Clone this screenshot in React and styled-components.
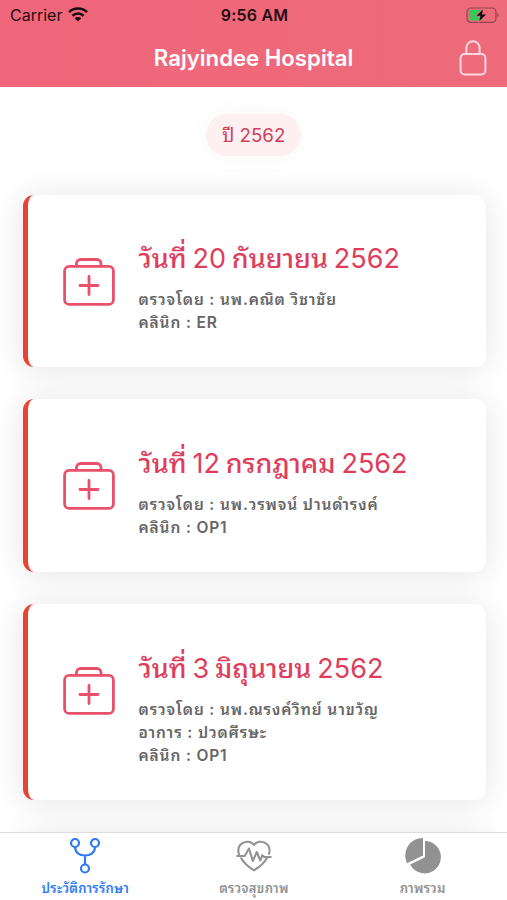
import React from 'react';
import styled, { createGlobalStyle } from 'styled-components';

const records = [
    { day: '20', month: 'กันยายน', year: '2562', lines: [['ตรวจโดย : นพ.คณิต วิชาชัย'], ['คลินิก : ', 'ER']] },
    { day: '12', month: 'กรกฎาคม', year: '2562', lines: [['ตรวจโดย : นพ.วรพจน์ ปานดำรงค์'], ['คลินิก : ', 'OP1']] },
    { day: '3', month: 'มิถุนายน', year: '2562', lines: [['ตรวจโดย : นพ.ณรงค์วิทย์ นาขวัญ'], ['อาการ : ปวดศีรษะ'], ['คลินิก : ', 'OP1']] },
];

const WifiIcon = () => (
    <svg width="20" height="15" viewBox="0 0 20 15">
        <g fill="none" stroke="#1d0b0f" strokeWidth="2.6">
            <path d="M1 5.2a12.8 12.8 0 0 1 18 0" />
            <path d="M4.4 8.8a8 8 0 0 1 11.2 0" />
        </g>
        <path d="M10 14.6l-3.3-3.3a4.7 4.7 0 0 1 6.6 0z" fill="#1d0b0f" />
    </svg>
);

const BatteryIcon = () => (
    <svg width="33" height="16" viewBox="0 0 33 16">
        <rect x="1" y="1" width="29" height="14.4" rx="4" fill="none" stroke="#93414f" strokeWidth="1.2" />
        <path d="M31.4 6v4.4c1.4-.6 1.4-3.8 0-4.4z" fill="#93414f" />
        <rect x="3" y="3" width="14" height="10.4" rx="1.6" fill="#35c759" />
        <path d="M16.8 2.4L10.6 8.8h3.9l-1.2 5.2L20 7.4h-4z" fill="#0d0808" stroke="#ef687b" strokeWidth="1.6" paintOrder="stroke" />
    </svg>
);

const LockIcon = () => (
    <svg width="28" height="38" viewBox="0 0 28 38" fill="none" stroke="#fdd9dd" strokeWidth="2">
        <rect x="1.6" y="15" width="24.8" height="20.5" rx="4" />
        <path d="M7.4 15V8.8a6.6 6.6 0 0 1 13.2 0V15" />
    </svg>
);

const KitIcon = () => (
    <svg width="52" height="48" viewBox="0 0 52 48" fill="none" stroke="#e9506a" strokeWidth="2.8" strokeLinecap="round">
        <rect x="1.6" y="8.4" width="48.8" height="38" rx="4.5" />
        <path d="M13.5 8V5.5a4 4 0 0 1 4-4H34a4 4 0 0 1 4 4V8" />
        <path d="M26 18.5v18M17 27.5h18" />
    </svg>
);

const ForkIcon = () => (
    <svg width="32" height="36" viewBox="0 0 32 36" fill="none" stroke="#2f7bf6" strokeWidth="2.2">
        <circle cx="6" cy="5" r="4" />
        <circle cx="26" cy="5" r="4" />
        <circle cx="16" cy="30.5" r="4" />
        <path d="M6 9c0 5.5 4.500 8.500 10 8.500S26 14.500 26 9M16 17.500v9" />
    </svg>
);

const HeartIcon = () => (
    <svg width="36" height="34" viewBox="0 0 36 34" fill="none" stroke="#929292" strokeWidth="2.1" strokeLinejoin="round">
        <path d="M3.2 16.2C1.5 11 2.8 6.4 6.4 4.1 10.5 1.6 15.6 2.6 18 6c2.400-3.400 7.500-4.400 11.600-1.900 3.600 2.300 4.900 6.900 3.100 11.600" />
        <path d="M4.700 18.500C7.500 23.500 12 27.800 18 31.300c6-3.500 10.500-7.800 13.300-12.800" />
        <path d="M.5 17h8.200l4.300-7.500 3.800 12.500 4-9 3.500 8.500 2-5.300 1.800 1.800h7.400" />
    </svg>
);

const PieIcon = () => (
    <svg width="38" height="38" viewBox="0 0 38 38" fill="#929292">
        <path d="M21 4a16.2 16.2 0 1 1-14.800 23.400L21 20.200z" />
        <path d="M19 1v17.5L3 26.200A17.500 17.500 0 0 1 19 1z" />
    </svg>
);

const App = () => {
    return (
        <Screen>
            <GlobalStyle />
            <Header>
                <StatusBar>
                    <Carrier>Carrier <WifiIcon /></Carrier>
                    <Clock>9:56 AM</Clock>
                    <BatteryIcon />
                </StatusBar>
                <NavBar>
                    <Title>Rajyindee Hospital</Title>
                    <LockIcon />
                </NavBar>
            </Header>
            <Content>
                <Year>ปี 2562</Year>
                {records.map((item) => (
                    <Card key={item.month}>
                        <KitIcon />
                        <div>
                            <DateText><Thai>วันที่</Thai> {item.day} <Thai>{item.month}</Thai> {item.year}</DateText>
                            {item.lines.map(([text, code]) => (
                                <Line key={text}>{text}{code && <b>{code}</b>}</Line>
                            ))}
                        </div>
                    </Card>
                ))}
                {/* next card, still under the tab bar */}
                <Card />
            </Content>
            <TabBar>
                <Tab $active><ForkIcon /><span>ประวัติการรักษา</span></Tab>
                <Tab><HeartIcon /><span>ตรวจสุขภาพ</span></Tab>
                <Tab><PieIcon /><span>ภาพรวม</span></Tab>
            </TabBar>
        </Screen>
    )
};

const GlobalStyle = createGlobalStyle`
    *{
        box-sizing: border-box;
    }
    body{
        margin: 0;
        background: #fff;
    }
`
const Screen = styled.div`
    display: flex;
    flex-direction: column;
    height: 900px;
    overflow: hidden;
    font-family: Inter, "Noto Sans Thai Looped", "Noto Sans", sans-serif;
    white-space: nowrap;
`
const Header = styled.header`
    flex: none;
    height: 87px;
    background: linear-gradient(90deg, #f0667a, #ed6b7b);
`
const StatusBar = styled.div`
    display: grid;
    grid-template-columns: 1fr auto 1fr;
    align-items: center;
    height: 29px;
    padding: 0 8px 0 10px;
    color: #260d12;
    font-size: 16px;
    > svg{
        justify-self: end;
    }
`
const Carrier = styled.div`
    display: flex;
    align-items: center;
    gap: 6px;
`
const Clock = styled.div`
    font-weight: 600;
    letter-spacing: 0.2px;
`
const NavBar = styled.div`
    display: grid;
    grid-template-columns: 1fr auto 1fr;
    align-items: center;
    height: 58px;
    padding: 0 20px;
    > svg{
        grid-column: 3;
        justify-self: end;
    }
`
const Title = styled.h1`
    grid-column: 2;
    margin: 0;
    padding-bottom: 2px;
    color: #fff;
    font-size: 22.2px;
    font-weight: 600;
`
const Content = styled.main`
    display: flex;
    flex: 1;
    flex-direction: column;
    min-height: 0;
    padding: 27px 21px 0 22.5px;
    overflow: hidden;
`
const Year = styled.div`
    align-self: center;
    flex: none;
    height: 42px;
    margin: 0 1px 38.5px 0;
    padding: 0 16px;
    border-radius: 21px;
    background: #feeff1;
    box-shadow: 0 0 30px rgba(0,0,0,0.03);
    color: #cf3f5a;
    font-size: 18.7px;
    line-height: 43px;
`
const Card = styled.section`
    display: flex;
    flex: none;
    align-items: flex-start;
    gap: 24px;
    margin-bottom: 32.4px;
    padding: 45.5px 20px 33px 35px;
    border-left: 5px solid #e74432;
    border-radius: 11px;
    background: #fff;
    box-shadow: 0 2px 32px rgba(0,0,0,0.11);
    &:last-child{
        margin-top: 1px;
    }
    > svg{
        flex: none;
        margin-top: 17.5px;
    }
`
const DateText = styled.h2`
    margin: 0 0 11px;
    color: #de3e5b;
    font-size: 27px;
    font-weight: 400;
    line-height: 37px;
    word-spacing: -1.8px;
`
const Thai = styled.span`
    font-weight: 500;
`
const Line = styled.p`
    margin: 0;
    color: #666;
    font-size: 15.5px;
    font-weight: 600;
    line-height: 23px;
    letter-spacing: 0.85px;
    b{
        font-weight: 600;
    }
`
const TabBar = styled.nav`
    display: grid;
    flex: none;
    grid-template-columns: repeat(3, 1fr);
    height: 68px;
    padding-left: 1px;
    border-top: 1px solid #ddd;
    background: #fff;
    z-index: 1;
`
const Tab = styled.div`
    display: flex;
    flex-direction: column;
    align-items: center;
    color: ${({ $active }) => ($active ? '#2f7bf6' : '#929292')};
    font-size: 13px;
    font-weight: 600;
    letter-spacing: 0.25px;
    svg{
        height: 46px;
    }
    span{
        line-height: 19px;
    }
`

export default App;
